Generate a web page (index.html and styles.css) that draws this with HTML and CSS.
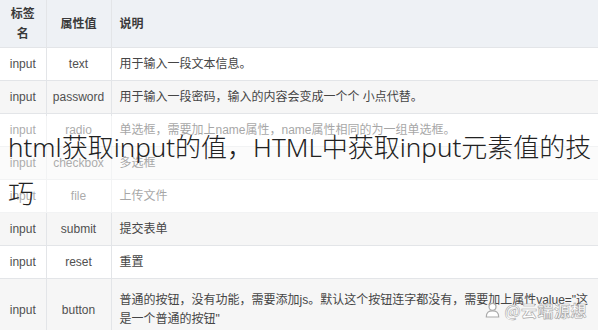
FILE: index.html
```html
<!DOCTYPE html>
<html lang="zh-CN">
<head>
<meta charset="utf-8">
<link rel="stylesheet" href="styles.css">
</head>
<body>
<div class="page">
  <table class="attr-table">
    <colgroup>
      <col class="c1"><col class="c2"><col class="c3">
    </colgroup>
    <thead>
      <tr class="head">
        <th class="tag">标签名</th>
        <th class="val">属性值</th>
        <th class="desc">说明</th>
      </tr>
    </thead>
    <tbody>
      <tr><td class="tag">input</td><td class="val">text</td><td class="desc">用于输入一段文本信息。</td></tr>
      <tr class="alt"><td class="tag">input</td><td class="val">password</td><td class="desc">用于输入一段密码，输入的内容会变成一个个 小点代替。</td></tr>
      <tr><td class="tag">input</td><td class="val">radio</td><td class="desc">单选框，需要加上name属性，name属性相同的为一组单选框。</td></tr>
      <tr class="alt"><td class="tag">input</td><td class="val">checkbox</td><td class="desc">多选框</td></tr>
      <tr><td class="tag">input</td><td class="val">file</td><td class="desc">上传文件</td></tr>
      <tr class="alt"><td class="tag">input</td><td class="val">submit</td><td class="desc">提交表单</td></tr>
      <tr><td class="tag">input</td><td class="val">reset</td><td class="desc">重置</td></tr>
      <tr class="alt tall"><td class="tag">input</td><td class="val">button</td><td class="desc">普通的按钮，没有功能，需要添加js。默认这个按钮连字都没有，需要加上属性value="这是一个普通的按钮"</td></tr>
    </tbody>
  </table>

  <div class="title-band">
    <h1 class="title">html获取input的值，HTML中获取input元素值的技巧</h1>
  </div>

  <div class="watermark">
    <svg class="wm-icon" width="15" height="16" viewBox="0 0 15 16">
      <circle cx="7.5" cy="4.8" r="3.5" fill="#fff" stroke="#aaa" stroke-width="1.2"/>
      <path d="M1.3 15 C1.3 10.2 3.8 8.8 7.5 8.8 C11.2 8.8 13.7 10.2 13.7 15 Z" fill="#fff" stroke="#aaa" stroke-width="1.2"/>
    </svg>
    <span class="wm-text">@云端源想</span>
  </div>
</div>
</body>
</html>
```
FILE: styles.css
```css
html, body {
  margin: 0;
  padding: 0;
  background: #ffffff;
}

.page {
  position: relative;
  width: 598px;
  height: 330px;
  overflow: hidden;
  font-family: "Liberation Sans", "Noto Sans CJK SC", sans-serif;
}

.attr-table {
  width: 598px;
  border-collapse: collapse;
  table-layout: fixed;
  font-size: 12px;
  color: #505050;
}

.c1 { width: 46px; }
.c2 { width: 65px; }
.c3 { width: auto; }

.attr-table th,
.attr-table td {
  border-bottom: 1px solid #e3e5e8;
  border-right: 1px solid #e3e5e8;
  line-height: 20px;
  vertical-align: middle;
}

.attr-table th:last-child,
.attr-table td:last-child {
  border-right: none;
}

.head th {
  background: #eef1f5;
  height: 47px;
  padding: 0;
  font-weight: bold;
  color: #3a3a3a;
}

.attr-table tbody tr {
  height: 33px;
}

.attr-table tbody td {
  padding: 0;
}

.attr-table tr.alt td {
  background: #f6f6f6;
}

.tag {
  text-align: center;
  padding: 0 8px !important;
}

.val {
  text-align: center;
}

.desc {
  text-align: left;
  padding: 0 6px 0 8px !important;
  color: #454545;
}

.head th.desc {
  padding-left: 8px !important;
}

tr.tall td {
  height: 50px;
  line-height: 19px;
  padding-top: 6px !important;
  padding-bottom: 6px !important;
}

.title-band {
  position: absolute;
  left: 0;
  right: 0;
  top: 116px;
  height: 97px;
  background: rgba(255, 255, 255, 0.52);
}

.title {
  margin: 0;
  padding: 8px 0 0 8px;
  font-family: "Noto Sans", "Noto Sans CJK SC", sans-serif;
  font-weight: 300;
  font-size: 26px;
  line-height: 46px;
  color: #222222;
}

.watermark {
  position: absolute;
  right: 11px;
  bottom: 8px;
  display: flex;
  align-items: center;
  gap: 4px;
}

.wm-text {
  font-family: "Noto Sans CJK SC", sans-serif;
  font-size: 16px;
  font-weight: 700;
  color: #ffffff;
  -webkit-text-stroke: 0.6px #a8a8a8;
  letter-spacing: 0.5px;
}
```
